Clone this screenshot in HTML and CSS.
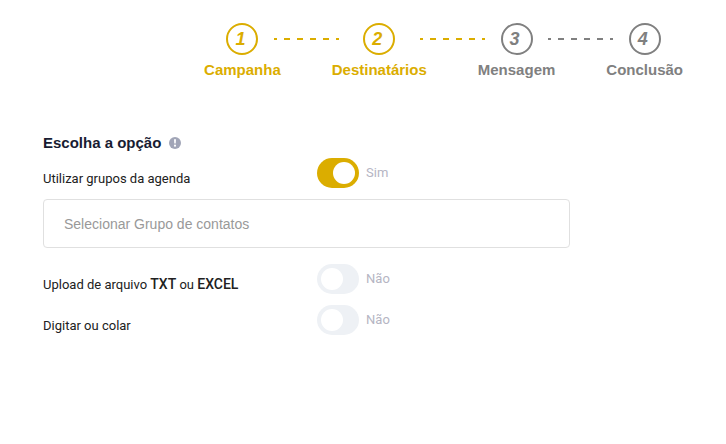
FILE: index.html
```html
<!DOCTYPE html>
<html lang="pt-BR">
<head>
<meta charset="utf-8">
<title>Destinatários</title>
<link rel="stylesheet" href="styles.css">
</head>
<body>
<ol class="steps">
  <li class="step done"><span class="number">1</span><span class="name">Campanha</span></li>
  <li class="line done" aria-hidden="true"></li>
  <li class="step done"><span class="number">2</span><span class="name">Destinatários</span></li>
  <li class="line done" aria-hidden="true"></li>
  <li class="step"><span class="number">3</span><span class="name">Mensagem</span></li>
  <li class="line" aria-hidden="true"></li>
  <li class="step"><span class="number">4</span><span class="name">Conclusão</span></li>
</ol>
<form class="options">
  <h1 class="title">Escolha a opção
    <svg class="info" viewBox="0 0 12 12" aria-hidden="true"><circle cx="6" cy="6" r="6" fill="#a1a5b7"/><path d="M5 2.2h2l-.3 4.3H5.3z" fill="#fff"/><circle cx="6" cy="8.7" r="1.1" fill="#fff"/></svg>
  </h1>
  <div class="option">
    <label class="label" for="groups">Utilizar grupos da agenda</label>
    <input class="toggle" type="checkbox" id="groups" checked>
    <span class="state">Sim</span>
  </div>
  <select class="picker" aria-label="Grupo de contatos">
    <option>Selecionar Grupo de contatos</option>
  </select>
  <div class="option">
    <label class="label" for="upload">Upload de arquivo <b>TXT</b> ou <b>EXCEL</b></label>
    <input class="toggle" type="checkbox" id="upload">
    <span class="state">Não</span>
  </div>
  <div class="option">
    <label class="label" for="typed">Digitar ou colar</label>
    <input class="toggle" type="checkbox" id="typed">
    <span class="state">Não</span>
  </div>
</form>
</body>
</html>
```
FILE: styles.css
```css
* {
  box-sizing: border-box;
}

body {
  margin: 0;
  background: #fff;
  font-family: "Liberation Sans", Arial, sans-serif;
}

.steps {
  display: flex;
  justify-content: flex-end;
  margin: 0;
  padding: 23px 43px 0 0;
  list-style: none;
}

.step,
.line {
  color: #808080;
}

.done {
  color: #dbad00;
}

.step {
  display: flex;
  flex-direction: column;
  align-items: center;
  gap: 6px;
  font-size: 15px;
  line-height: 18px;
  font-weight: 700;
}

.number {
  width: 32px;
  height: 32px;
  padding-right: 4px;
  border: 2px solid currentColor;
  border-radius: 50%;
  font-size: 18px;
  line-height: 28px;
  font-style: italic;
  text-align: center;
}

.line {
  width: 65px;
  height: 2px;
  margin: 15px -7px 0;
  background: repeating-linear-gradient(to right, currentColor 0 3px, transparent 3px 10px, currentColor 10px 13px);
}

.options {
  max-width: 570px;
  padding: 53px 0 0 43px;
}

.title {
  display: flex;
  align-items: center;
  gap: 8px;
  margin: 0 0 4px;
  font-size: 15px;
  line-height: 22px;
  color: #181c32;
}

.info {
  width: 12px;
  height: 12px;
}

.option {
  display: grid;
  grid-template-columns: 52% 42px 1fr;
  align-items: start;
  margin-bottom: 11px;
  font-family: Roboto, "Liberation Sans", sans-serif;
  font-size: 13px;
  line-height: 18px;
  color: #181c32;
}

.label {
  padding-top: 12px;
  color: #212121;
}

.label b {
  font-size: 14px;
  line-height: 14px;
  font-weight: 500;
}

.toggle {
  appearance: none;
  width: 42px;
  height: 30px;
  margin: 0;
  padding: 4px;
  border-radius: 15px;
  background: #eef1f5;
}

.toggle::before {
  content: "";
  display: block;
  width: 22px;
  height: 22px;
  border-radius: 50%;
  background: #fff;
}

.toggle:checked {
  background: #dbad00;
}

.toggle:checked::before {
  margin-left: auto;
}

.state {
  padding: 6px 0 0 7px;
  color: #b5b5c3;
}

.picker {
  display: block;
  appearance: none;
  width: 100%;
  height: 49px;
  margin-bottom: 16px;
  padding: 0 20px;
  border: 1px solid #e0e0e0;
  border-radius: 4px;
  background: #fff;
  font-family: inherit;
  font-size: 14px;
  color: #999;
}
```
